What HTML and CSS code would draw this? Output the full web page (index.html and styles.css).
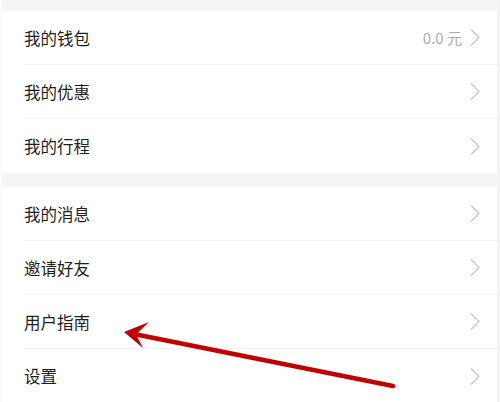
FILE: index.html
```html
<!DOCTYPE html>
<html lang="zh-CN">
<head>
<meta charset="utf-8">
<link rel="stylesheet" href="styles.css">
</head>
<body>
<div class="page">
  <div class="gap gap-top"></div>
  <div class="group">
    <div class="row"><span class="label">我的钱包</span><span class="extra"><span class="value">0.0 元</span><svg class="chev" viewBox="0 0 10 17"><path d="M1 0.5 L9 8.5 L1 16.5"/></svg></span></div>
    <div class="row"><span class="label">我的优惠</span><span class="extra"><svg class="chev" viewBox="0 0 10 17"><path d="M1 0.5 L9 8.5 L1 16.5"/></svg></span></div>
    <div class="row"><span class="label">我的行程</span><span class="extra"><svg class="chev" viewBox="0 0 10 17"><path d="M1 0.5 L9 8.5 L1 16.5"/></svg></span></div>
  </div>
  <div class="gap"></div>
  <div class="group">
    <div class="row"><span class="label">我的消息</span><span class="extra"><svg class="chev" viewBox="0 0 10 17"><path d="M1 0.5 L9 8.5 L1 16.5"/></svg></span></div>
    <div class="row"><span class="label">邀请好友</span><span class="extra"><svg class="chev" viewBox="0 0 10 17"><path d="M1 0.5 L9 8.5 L1 16.5"/></svg></span></div>
    <div class="row"><span class="label">用户指南</span><span class="extra"><svg class="chev" viewBox="0 0 10 17"><path d="M1 0.5 L9 8.5 L1 16.5"/></svg></span></div>
    <div class="row"><span class="label">设置</span><span class="extra"><svg class="chev" viewBox="0 0 10 17"><path d="M1 0.5 L9 8.5 L1 16.5"/></svg></span></div>
  </div>
  <svg class="arrow" viewBox="0 0 500 402" width="500" height="402">
    <line x1="393" y1="386" x2="134" y2="334" stroke="#c00000" stroke-width="4.5" stroke-linecap="round"/>
    <polygon points="124,332 149,322 136,334.5 143,348" fill="#c00000"/>
  </svg>
</div>
</body>
</html>
```

FILE: styles.css
```css
html, body {
  margin: 0;
  padding: 0;
  background: #ffffff;
}
body {
  font-family: "Noto Sans CJK SC", "Noto Sans", sans-serif;
  width: 500px;
  height: 402px;
  overflow: hidden;
}
.page {
  position: relative;
  width: 500px;
  height: 402px;
  box-sizing: border-box;
  padding: 0 3px 0 2px;
  background: linear-gradient(to right, #fbfbfb 0, #fbfbfb 2px, transparent 2px, transparent 497px, #f2f2f2 497px);
}
.gap {
  height: 14px;
  background: #f4f4f4;
}
.gap-top {
  height: 11px;
}
.group {
  background: #ffffff;
}
.row {
  height: 54px;
  margin-left: 22px;
  padding-right: 17px;
  display: flex;
  align-items: center;
  justify-content: space-between;
  border-bottom: 1px solid #f3f3f3;
  box-sizing: border-box;
}
.group .row:last-child {
  border-bottom: none;
}
.label {
  font-size: 16.5px;
  color: #1e1e1e;
  letter-spacing: 0;
}
.extra {
  display: flex;
  align-items: center;
  gap: 8px;
}
.value {
  font-size: 15px;
  color: #acacac;
}
.chev {
  width: 10px;
  height: 17px;
  fill: none;
  stroke: #c4c4c4;
  stroke-width: 1.2;
}
.arrow {
  position: absolute;
  left: 0;
  top: 0;
  pointer-events: none;
}
```
